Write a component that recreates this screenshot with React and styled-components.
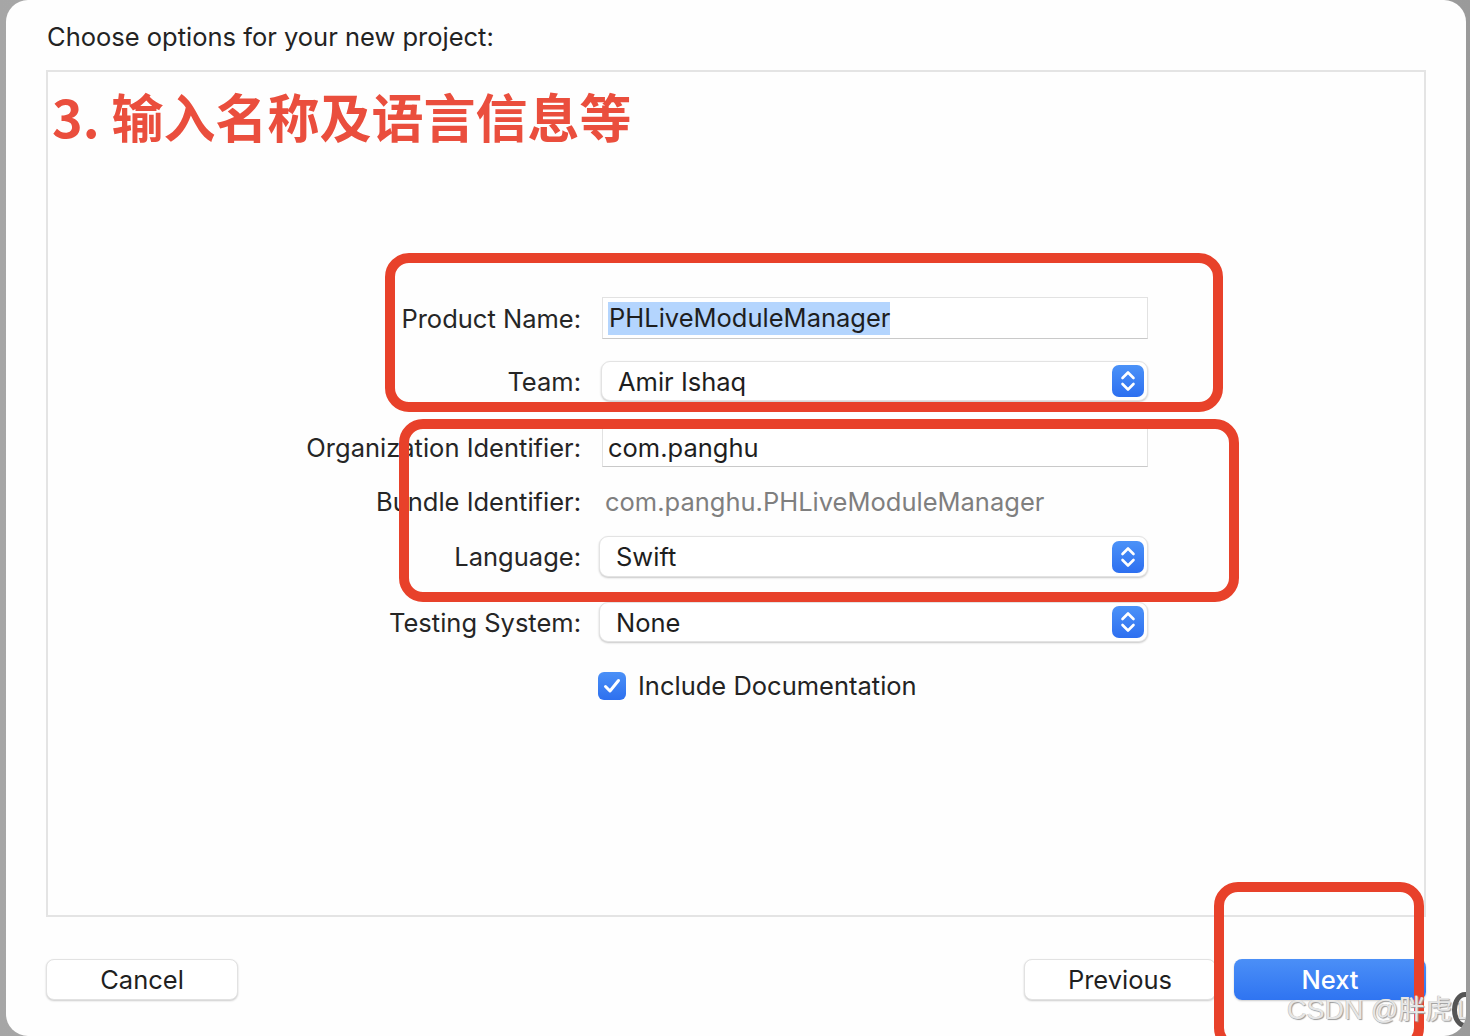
import React from 'react'
import styled, { createGlobalStyle } from 'styled-components'

const GlobalStyle = createGlobalStyle`
  html, body {
    margin: 0;
    padding: 0;
    background: linear-gradient(90deg, #a6a6a6 0%, #b4b4b4 50%, #9a9a9a 100%);
  }
  body {
    font-family: Inter, "Noto Sans", "Noto Sans CJK SC", sans-serif;
    color: #222;
  }
`;

function Stepper() {
  return (
    <StepBtn>
      <svg width="18" height="24" viewBox="0 0 18 24" fill="none" stroke="#fff" strokeWidth="2.6" strokeLinecap="round" strokeLinejoin="round">
        <polyline points="3.5,9 9,3.5 14.5,9" />
        <polyline points="3.5,15 9,20.5 14.5,15" />
      </svg>
    </StepBtn>
  )
}

function App() {
  return (
    <>
      <GlobalStyle />
      <Window>
        <Title>Choose options for your new project:</Title>
        <Panel>
          <Heading>3. 输入名称及语言信息等</Heading>
          <Form>
            <Row $top={151} $h={42}>
              <Label>Product Name:</Label>
              <TextField>
                <Selected>PHLiveModuleManager</Selected>
              </TextField>
            </Row>
            <Row $top={22} $h={40}>
              <Label>Team:</Label>
              <Popup>
                <PopupText>Amir Ishaq</PopupText>
                <Stepper />
              </Popup>
            </Row>
            <Row $top={26} $h={40}>
              <Label>Organization Identifier:</Label>
              <TextField>com.panghu</TextField>
            </Row>
            <Row $top={14} $h={40}>
              <Label>Bundle Identifier:</Label>
              <Plain>com.panghu.PHLiveModuleManager</Plain>
            </Row>
            <Row $top={15} $h={41}>
              <Label>Language:</Label>
              <Popup $shift>
                <PopupText>Swift</PopupText>
                <Stepper />
              </Popup>
            </Row>
            <Row $top={25} $h={40}>
              <Label>Testing System:</Label>
              <Popup $shift>
                <PopupText>None</PopupText>
                <Stepper />
              </Popup>
            </Row>
            <Row $top={28} $h={30}>
              <span />
              <Check>
                <CheckBox>
                  <svg width="18" height="16" viewBox="0 0 18 16" fill="none" stroke="#fff" strokeWidth="3" strokeLinecap="round" strokeLinejoin="round">
                    <polyline points="2.5,8.5 7,13 15.5,2.5" />
                  </svg>
                </CheckBox>
                Include Documentation
              </Check>
            </Row>
          </Form>
        </Panel>
        <Footer>
          <Button>Cancel</Button>
          <Right>
            <Button>Previous</Button>
            <Button $primary>Next</Button>
          </Right>
        </Footer>

        <Mark $x={379} $y={253} $w={838} $h={159} />
        <Mark $x={393} $y={419} $w={840} $h={183} />
        <Mark $x={1208} $y={882} $w={210} $h={170} />
        <Watermark>CSDN @胖虎1</Watermark>
        <Blob />
      </Window>
    </>
  )
}

export default App

const Window = styled.div`
  position: relative;
  margin: 0 4px 0 6px;
  height: 1036px;
  box-sizing: border-box;
  background: #fefefe;
  border-radius: 22px;
  padding: 20px 40px 0 40px;
  display: flex;
  flex-direction: column;
  overflow: hidden;
`;

const Title = styled.div`
  font-size: 25.5px;
  line-height: 34px;
  height: 34px;
  padding-left: 1px;
  color: #232323;
`;

const Panel = styled.div`
  margin-top: 16px;
  height: 847px;
  box-sizing: border-box;
  border: 2px solid #e4e4e4;
  display: flex;
  flex-direction: column;
`;

const Heading = styled.div`
  margin: 14px 0 0 4px;
  font-size: 52px;
  line-height: 60px;
  height: 60px;
  font-weight: 700;
  color: #ea4e3d;
  font-family: "Noto Sans CJK SC", "Noto Sans", sans-serif;
`;

const Form = styled.div`
  display: flex;
  flex-direction: column;
`;

const Row = styled.div`
  display: grid;
  grid-template-columns: 533px 548px;
  column-gap: 19px;
  align-items: center;
  margin-top: ${p => p.$top}px;
  height: ${p => p.$h}px;
`;

const Label = styled.div`
  text-align: right;
  font-size: 25.5px;
  color: #262626;
  white-space: nowrap;
`;

const TextField = styled.div`
  height: 100%;
  box-sizing: border-box;
  margin-left: 2px;
  background: #fff;
  border: 1px solid #e2e2e2;
  border-bottom: 1px solid #c9c9c9;
  display: flex;
  align-items: center;
  padding-left: 5px;
  font-size: 25.5px;
  color: #1e1e1e;
`;

const Selected = styled.span`
  background: #b4d5fe;
  padding: 1px 0 2px 1px;
  line-height: 30px;
`;

const Plain = styled.div`
  padding-left: 5px;
  font-size: 25.5px;
  color: #7f7f7f;
`;

const Popup = styled.div`
  height: 100%;
  box-sizing: border-box;
  margin-left: ${p => (p.$shift ? '-1px' : '1px')};
  background: #fff;
  border-radius: 9px;
  border: 1px solid #e3e3e3;
  box-shadow: 0 1px 2px rgba(0, 0, 0, 0.22);
  display: flex;
  align-items: center;
  justify-content: space-between;
  padding: 0 3px 0 16px;
`;

const PopupText = styled.span`
  font-size: 25.5px;
  color: #1e1e1e;
`;

const StepBtn = styled.div`
  width: 32px;
  height: 32px;
  border-radius: 7px;
  background: linear-gradient(180deg, #4b92f8 0%, #2d6ff0 100%);
  display: flex;
  align-items: center;
  justify-content: center;
`;

const Check = styled.label`
  display: flex;
  align-items: center;
  gap: 12px;
  font-size: 25.5px;
  color: #232323;
  margin-left: -2px;
`;

const CheckBox = styled.span`
  width: 28px;
  height: 28px;
  border-radius: 6px;
  background: linear-gradient(180deg, #4a90f7 0%, #2e70ef 100%);
  display: flex;
  align-items: center;
  justify-content: center;
`;

const Footer = styled.div`
  margin-top: 42px;
  display: flex;
  justify-content: space-between;
`;

const Right = styled.div`
  display: flex;
  gap: 18px;
`;

const Button = styled.div`
  width: 192px;
  height: 41px;
  box-sizing: border-box;
  border-radius: 8px;
  display: flex;
  align-items: center;
  justify-content: center;
  font-size: 25.5px;
  color: ${p => (p.$primary ? '#fff' : '#1f1f1f')};
  font-weight: ${p => (p.$primary ? 500 : 400)};
  background: ${p => (p.$primary ? 'linear-gradient(180deg, #4b8ff7 0%, #2f74f1 100%)' : '#fff')};
  border: ${p => (p.$primary ? 'none' : '1px solid #e2e2e2')};
  box-shadow: 0 1px 2px rgba(0, 0, 0, 0.2);
`;

const Mark = styled.div`
  position: absolute;
  left: ${p => p.$x}px;
  top: ${p => p.$y}px;
  width: ${p => p.$w}px;
  height: ${p => p.$h}px;
  box-sizing: border-box;
  border: 10px solid #e8412a;
  border-radius: 24px;
  pointer-events: none;
`;

const Watermark = styled.div`
  position: absolute;
  left: 1281px;
  top: 988px;
  font-size: 27px;
  color: #e6e6e6;
  text-shadow: 1px 1px 1px #9a9a9a, -0.5px -0.5px 0 #bdbdbd;
  font-family: "Liberation Sans", "Noto Sans CJK SC", sans-serif;
  white-space: nowrap;
`;

const Blob = styled.div`
  position: absolute;
  left: 1446px;
  top: 992px;
  width: 26px;
  height: 36px;
  border-radius: 50%;
  border: 5px solid #555;
  box-sizing: border-box;
`;
